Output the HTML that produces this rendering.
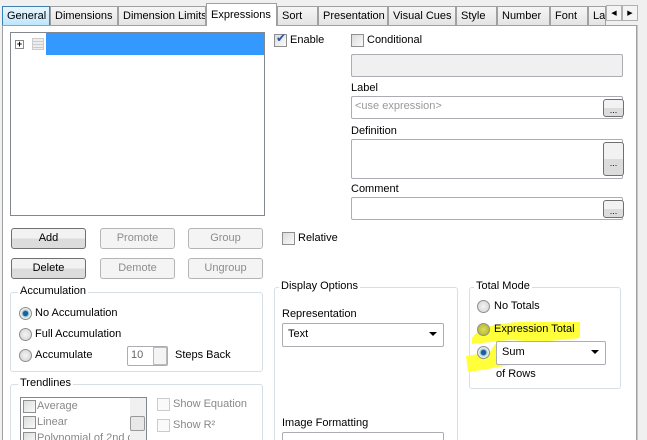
<!DOCTYPE html><html><head><style>
*{box-sizing:border-box;margin:0;padding:0}
html,body{width:647px;height:440px;overflow:hidden}
body{background:#f0f0f0;font-family:"Liberation Sans",sans-serif;font-size:11px;color:#000;position:relative}
.a{position:absolute;white-space:nowrap}
.tab{position:absolute;top:6px;height:19px;border:1px solid #a0a0a0;border-bottom:none;background:linear-gradient(#f6f6f6,#e4e4e4);padding:3px 0 0 4px;white-space:nowrap;overflow:hidden}
.btn{position:absolute;height:21px;border:1px solid #707070;border-radius:3px;background:linear-gradient(#f2f2f2 50%,#dcdcdc 50%);text-align:center;line-height:19px}
.dis{border-color:#b5b5b5;background:#f4f4f4;color:#8d8d8d}
.grp{position:absolute;border:1px solid #d5dfe5;border-radius:3px}
.lg{position:absolute;top:-8px;left:6px;background:#fff;padding:0 2px}
.cb{position:absolute;width:13px;height:13px;border:1px solid #8e8f8f;background:linear-gradient(135deg,#dcdcdc,#fafafa)}
.rb{position:absolute;width:13px;height:13px;border:1px solid #8e8f8f;border-radius:50%;background:radial-gradient(#f4f4f4,#d0d0d0)}
.inp{position:absolute;border:1px solid #abadb3;background:#fff;border-radius:2px;overflow:hidden}
.dd{position:absolute;width:21px;height:19px;border:1px solid #707070;border-radius:3px;background:linear-gradient(#f2f2f2 50%,#dcdcdc 50%);text-align:center;font-size:9px;line-height:20px}
.arr{position:absolute;right:6px;top:8px;border-left:4px solid transparent;border-right:4px solid transparent;border-top:4px solid #000}
</style></head><body>
<div class="a" style="left:2px;top:25px;width:635px;height:415px;background:#fff;border:1px solid #a0a0a0;border-bottom:none"></div>
<div class="a" style="left:637px;top:25px;width:10px;height:415px;background:#f0f0f0;border-left:1px solid #c8c8c8"></div>
<div class="tab" style="left:2px;width:48px;background:linear-gradient(#eaf6fd,#bee6fd);border-color:#3c7fb1">General</div>
<div class="tab" style="left:50px;width:68px">Dimensions</div>
<div class="tab" style="left:118px;width:88px">Dimension Limits</div>
<div class="tab" style="left:206px;top:3px;height:23px;width:71px;background:#fff;padding-top:5px;border-color:#a0a0a0">Expressions</div>
<div class="tab" style="left:277px;width:41px">Sort</div>
<div class="tab" style="left:318px;width:70px">Presentation</div>
<div class="tab" style="left:388px;width:68px">Visual Cues</div>
<div class="tab" style="left:456px;width:41px">Style</div>
<div class="tab" style="left:497px;width:53px">Number</div>
<div class="tab" style="left:550px;width:38px">Font</div>
<div class="tab" style="left:588px;width:18px">La</div>
<div class="a" style="left:606px;top:5px;width:16px;height:16px;border:1px solid #b0b0b0;background:#f4f4f4;font-size:7px;text-align:center;line-height:15px">◀</div>
<div class="a" style="left:622px;top:5px;width:16px;height:16px;border:1px solid #b0b0b0;background:#f4f4f4;font-size:7px;text-align:center;line-height:15px">▶</div>

<div class="a" style="left:10px;top:32px;width:255px;height:184px;border:1px solid #828790;background:#fff"></div>
<div class="a" style="left:46px;top:33px;width:218px;height:22px;background:#3399ff"></div>
<div class="a" style="left:15px;top:40px;width:9px;height:9px;border:1px solid #888;font-size:9px;line-height:7px;text-align:center;font-weight:bold">+</div>
<div class="a" style="left:32px;top:38px;width:12px;height:12px;border:1px solid #ccc;background:repeating-linear-gradient(#eee 0 2px,#ccc 2px 3px)"></div>

<div class="btn" style="left:11px;top:228px;width:75px">Add</div>
<div class="btn dis" style="left:100px;top:228px;width:75px">Promote</div>
<div class="btn dis" style="left:188px;top:228px;width:75px">Group</div>
<div class="btn" style="left:11px;top:258px;width:75px">Delete</div>
<div class="btn dis" style="left:100px;top:258px;width:75px">Demote</div>
<div class="btn dis" style="left:188px;top:258px;width:75px">Ungroup</div>

<div class="grp" style="left:10px;top:292px;width:253px;height:80px"><span class="lg" style="left:7px">Accumulation</span></div>
<div class="rb" style="left:19px;top:307px;background:radial-gradient(#1c5fa0 30%,#9cc 40%,#eee 60%)"></div><div class="a" style="left:35px;top:307px">No Accumulation</div>
<div class="rb" style="left:19px;top:328px"></div><div class="a" style="left:35px;top:328px">Full Accumulation</div>
<div class="rb" style="left:19px;top:349px"></div><div class="a" style="left:35px;top:349px">Accumulate</div>
<div class="inp" style="left:127px;top:346px;width:41px;height:20px;color:#666;padding:2px 0 0 3px">10</div>
<div class="a" style="left:153px;top:347px;width:14px;height:18px;border:1px solid #bbb;background:#f4f4f4"></div>
<div class="a" style="left:175px;top:349px">Steps Back</div>

<div class="grp" style="left:10px;top:384px;width:253px;height:60px"><span class="lg" style="left:7px">Trendlines</span></div>
<div class="a" style="left:20px;top:397px;width:127px;height:45px;border:1px solid #828790;overflow:hidden"></div>
<div class="cb" style="left:23px;top:400px"></div><div class="a" style="left:37px;top:400px;color:#888">Average</div>
<div class="cb" style="left:23px;top:416px"></div><div class="a" style="left:37px;top:416px;color:#888">Linear</div>
<div class="cb" style="left:23px;top:432px"></div><div class="a" style="left:37px;top:432px;color:#888">Polynomial of 2nd d</div>
<div class="a" style="left:130px;top:398px;width:16px;height:43px;background:#f0f0f0"></div>
<div class="a" style="left:130px;top:416px;width:15px;height:15px;border:1px solid #999;border-radius:2px;background:#e8e8e8"></div>
<div class="cb" style="left:157px;top:398px;background:#fafafa;border-color:#ccc"></div><div class="a" style="left:173px;top:398px;color:#888">Show Equation</div>
<div class="cb" style="left:157px;top:419px;background:#fafafa;border-color:#ccc"></div><div class="a" style="left:173px;top:419px;color:#888">Show R²</div>

<div class="cb" style="left:274px;top:34px"></div><div class="a" style="left:276px;top:31px;color:#2b4fa8;font-size:12px">✔</div><div class="a" style="left:290px;top:34px">Enable</div>
<div class="cb" style="left:351px;top:34px"></div><div class="a" style="left:367px;top:34px">Conditional</div>
<div class="inp" style="left:351px;top:54px;width:272px;height:23px;background:#f0f0f0"></div>
<div class="a" style="left:351px;top:82px">Label</div>
<div class="inp" style="left:351px;top:96px;width:272px;height:23px;color:#999;padding:3px 0 0 3px">&lt;use expression&gt;</div>
<div class="dd" style="left:603px;top:99px;height:18px">...</div>
<div class="a" style="left:351px;top:125px">Definition</div>
<div class="inp" style="left:351px;top:139px;width:272px;height:40px"></div>
<div class="dd" style="left:603px;top:142px;height:34px;line-height:40px">...</div>
<div class="a" style="left:351px;top:183px">Comment</div>
<div class="inp" style="left:351px;top:197px;width:272px;height:23px"></div>
<div class="dd" style="left:603px;top:200px;height:18px">...</div>
<div class="cb" style="left:282px;top:232px"></div><div class="a" style="left:298px;top:232px">Relative</div>

<div class="grp" style="left:274px;top:287px;width:184px;height:160px"><span class="lg" style="left:4px">Display Options</span></div>
<div class="a" style="left:282px;top:308px">Representation</div>
<div class="inp" style="left:282px;top:323px;width:162px;height:24px;padding:4px 0 0 5px">Text<span class="arr"></span></div>
<div class="a" style="left:282px;top:417px">Image Formatting</div>
<div class="inp" style="left:282px;top:432px;width:162px;height:20px"></div>

<div class="grp" style="left:469px;top:287px;width:152px;height:102px"><span class="lg" style="left:4px">Total Mode</span></div>
<svg class="a" style="left:460px;top:310px" width="130" height="75"><path d="M12 28 Q20 14 60 12 L120 12 L120 28 L80 32 L50 30 L12 34Z M35 34 L102 32 L100 50 L50 55 L22 60 L8 62 L6 46 L30 42Z" fill="#ffff3a"/></svg>
<div class="rb" style="left:477px;top:300px"></div><div class="a" style="left:494px;top:300px">No Totals</div>
<div class="rb" style="left:477px;top:323px;background:radial-gradient(#dcdc60,#b0b020)"></div><div class="a" style="left:494px;top:323px">Expression Total</div>
<div class="rb" style="left:477px;top:346px;background:radial-gradient(#1c5fa0 30%,#9cc 40%,#eee 60%)"></div>
<div class="inp" style="left:496px;top:341px;width:110px;height:24px;padding:4px 0 0 5px">Sum<span class="arr"></span></div>
<div class="a" style="left:496px;top:368px">of Rows</div>
</body></html>
